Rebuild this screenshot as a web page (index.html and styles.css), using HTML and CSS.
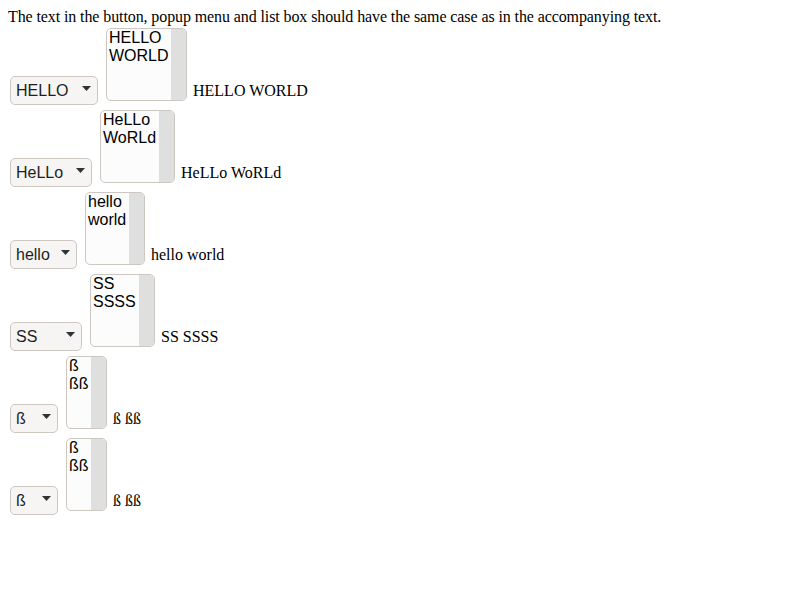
FILE: index.html
```html
<!DOCTYPE html>
<html>
<head>
<meta charset="utf-8">
<link rel="stylesheet" href="styles.css">
</head>
<body>
<div class="intro">The text in the button, popup menu and list box should have the same case as in the accompanying text.</div>
<div class="row"><span class="popup pw1">HELLO<svg class="arrow" width="9" height="5" viewBox="0 0 9 5"><polygon points="0,0 9,0 4.5,5"/></svg></span> <span class="listbox lw1"><span class="opt">HELLO</span><span class="opt">WORLD</span><span class="track"></span></span> HELLO WORLD</div>
<div class="row"><span class="popup pw2">HeLLo<svg class="arrow" width="9" height="5" viewBox="0 0 9 5"><polygon points="0,0 9,0 4.5,5"/></svg></span> <span class="listbox lw2"><span class="opt">HeLLo</span><span class="opt">WoRLd</span><span class="track"></span></span> HeLLo WoRLd</div>
<div class="row"><span class="popup pw3">hello<svg class="arrow" width="9" height="5" viewBox="0 0 9 5"><polygon points="0,0 9,0 4.5,5"/></svg></span> <span class="listbox lw3"><span class="opt">hello</span><span class="opt">world</span><span class="track"></span></span> hello world</div>
<div class="row"><span class="popup pw4">SS<svg class="arrow" width="9" height="5" viewBox="0 0 9 5"><polygon points="0,0 9,0 4.5,5"/></svg></span> <span class="listbox lw4"><span class="opt">SS</span><span class="opt">SSSS</span><span class="track"></span></span> SS SSSS</div>
<div class="row"><span class="popup pw5">ß<svg class="arrow" width="9" height="5" viewBox="0 0 9 5"><polygon points="0,0 9,0 4.5,5"/></svg></span> <span class="listbox lw5"><span class="opt">ß</span><span class="opt">ßß</span><span class="track"></span></span> ß ßß</div>
<div class="row"><span class="popup pw5">ß<svg class="arrow" width="9" height="5" viewBox="0 0 9 5"><polygon points="0,0 9,0 4.5,5"/></svg></span> <span class="listbox lw5"><span class="opt">ß</span><span class="opt">ßß</span><span class="track"></span></span> ß ßß</div>
</body>
</html>
```
FILE: styles.css
```css
html, body {
  background: #ffffff;
}
body {
  margin: 8px;
  font-family: "Liberation Serif", "Times New Roman", serif;
  font-size: 16px;
  color: #000000;
}
.intro {
  letter-spacing: -0.1px;
}
.row {
  height: 82px;
}
.popup {
  display: inline-block;
  position: relative;
  box-sizing: border-box;
  margin: 2px;
  padding: 5px 5px 4px 5px;
  border: 1px solid #cdc7c2;
  border-radius: 5px;
  background: #f6f5f4;
  font-family: "Liberation Sans", Arial, sans-serif;
  font-size: 16px;
  line-height: 18px;
  color: #1e1e1e;
  white-space: nowrap;
}
.arrow {
  position: absolute;
  right: 6px;
  top: 9px;
  fill: #2e3436;
}
.pw1 { width: 88px; }
.pw2 { width: 82px; }
.pw3 { width: 67px; }
.pw4 { width: 72px; }
.pw5 { width: 48px; }
.listbox {
  display: inline-block;
  position: relative;
  box-sizing: border-box;
  height: 73px;
  margin: 2px;
  padding: 0 0 0 2px;
  border: 1px solid #cdc7c2;
  border-radius: 5px;
  background: #fcfcfc;
  overflow: hidden;
  vertical-align: -7px;
  font-family: "Liberation Sans", Arial, sans-serif;
  font-size: 16px;
  line-height: 18px;
  color: #000000;
}
.opt {
  display: block;
  white-space: nowrap;
}
.track {
  position: absolute;
  top: 0;
  right: 0;
  bottom: 0;
  width: 15px;
  background: #dfdfdf;
}
.lw1 { width: 81px; }
.lw2 { width: 75px; }
.lw3 { width: 60px; }
.lw4 { width: 65px; }
.lw5 { width: 41px; }
```
